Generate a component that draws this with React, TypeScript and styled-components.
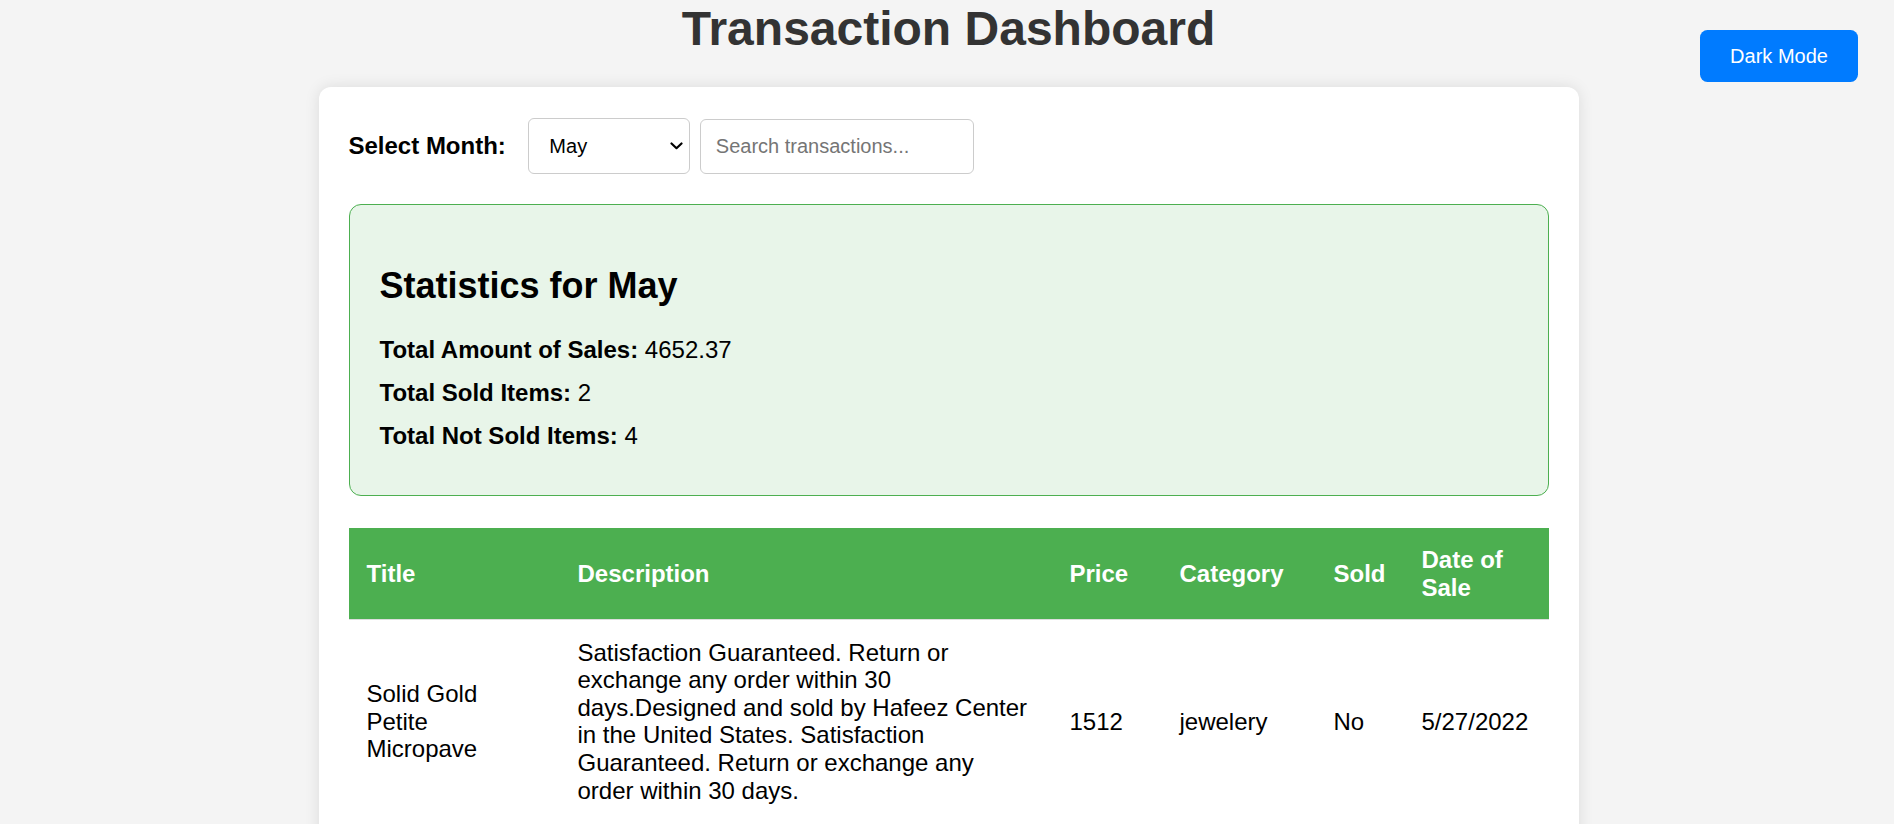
import React, { useState } from "react";
import styled, { createGlobalStyle } from "styled-components";

const GlobalStyle = createGlobalStyle`
  * { box-sizing: border-box; }
  body {
    margin: 0;
    background: #f4f4f4;
    font-family: "Liberation Sans", Arial, sans-serif;
    color: #000;
  }
`;

const Page = styled.div`
  position: relative;
  padding: 1px 0 0 3px;
  min-height: 824px;
`;

const Title = styled.h1`
  margin: 0;
  text-align: center;
  font-size: 48px;
  line-height: 55px;
  font-weight: bold;
  color: #333;
`;

const ModeButton = styled.button`
  position: absolute;
  top: 30px;
  right: 36px;
  width: 158px;
  height: 52px;
  border: none;
  border-radius: 7.5px;
  background: #007bff;
  color: #fff;
  font-family: "Liberation Sans", Arial, sans-serif;
  font-size: 20px;
  cursor: pointer;
`;

const Card = styled.main`
  width: 1260px;
  margin: 31px auto 0;
  padding: 30px;
  background: #fff;
  border-radius: 12px;
  box-shadow: 0 0 15px rgba(0, 0, 0, 0.1);
`;

const Controls = styled.div`
  display: flex;
  align-items: center;
  height: 58px;
  margin-bottom: 29px;
`;

const Label = styled.label`
  font-size: 24px;
  font-weight: bold;
  margin-right: 22px;
`;

const SelectWrap = styled.div`
  position: relative;
  width: 162px;
  height: 56px;
  margin-right: 10px;
`;

const MonthSelect = styled.select`
  appearance: none;
  -webkit-appearance: none;
  width: 100%;
  height: 100%;
  padding: 0 40px 0 20.5px;
  font-family: "Liberation Sans", Arial, sans-serif;
  font-size: 20px;
  color: #000;
  background: #fff;
  border: 1.5px solid #ccc;
  border-radius: 6px;
  outline: none;
`;

const Chevron = styled.svg`
  position: absolute;
  right: 7px;
  top: 24px;
  width: 13px;
  height: 8px;
  pointer-events: none;
`;

const SearchInput = styled.input`
  width: 274px;
  height: 55px;
  padding: 0 15px;
  font-family: "Liberation Sans", Arial, sans-serif;
  font-size: 20px;
  border: 1.5px solid #ccc;
  border-radius: 6px;
  &::placeholder { color: #757575; }
`;

const StatsBox = styled.section`
  border: 1.5px solid #4caf50;
  background: #e8f5e9;
  border-radius: 12px;
  padding: 30px;
`;

const StatsHeading = styled.h2`
  margin: 30px 0;
  font-size: 36px;
  line-height: 41.4px;
  font-weight: bold;
`;

const StatLine = styled.p`
  margin: 15px 0;
  font-size: 24px;
  line-height: 28px;
  & strong { font-weight: bold; }
`;

const Table = styled.table`
  width: 1200px;
  margin-top: 31.5px;
  border-collapse: collapse;
  table-layout: fixed;
`;

const Th = styled.th`
  background: #4caf50;
  color: #fff;
  padding: 18px;
  text-align: left;
  font-size: 24px;
  line-height: 27.6px;
  font-weight: bold;
  border-bottom: 1.5px solid #ddd;
`;

const Td = styled.td`
  padding: 18.5px 18px;
  font-size: 24px;
  line-height: 27.6px;
  vertical-align: middle;
  text-align: left;
`;

const columns = [
  { key: "title", label: "Title", width: 211 },
  { key: "description", label: "Description", width: 492 },
  { key: "price", label: "Price", width: 110 },
  { key: "category", label: "Category", width: 154 },
  { key: "sold", label: "Sold", width: 88 },
  { key: "date", label: "Date of Sale", width: 145 },
];

const rows = [
  {
    title: "Solid Gold Petite Micropave",
    description:
      "Satisfaction Guaranteed. Return or exchange any order within 30 days.Designed and sold by Hafeez Center in the United States. Satisfaction Guaranteed. Return or exchange any order within 30 days.",
    price: "1512",
    category: "jewelery",
    sold: "No",
    date: "5/27/2022",
  },
];

const months = [
  "January", "February", "March", "April", "May", "June",
  "July", "August", "September", "October", "November", "December",
];

export default function App() {
  const [month, setMonth] = useState("May");
  return (
    <Page>
      <GlobalStyle />
      <Title>Transaction Dashboard</Title>
      <ModeButton>Dark Mode</ModeButton>
      <Card>
        <Controls>
          <Label>Select Month:</Label>
          <SelectWrap>
            <MonthSelect value={month} onChange={(e) => setMonth(e.target.value)}>
              {months.map((m) => (
                <option key={m} value={m}>{m}</option>
              ))}
            </MonthSelect>
            <Chevron viewBox="0 0 13 8" aria-hidden="true">
              <polyline
                points="1.5,1.5 6.5,6.2 11.5,1.5"
                fill="none"
                stroke="#000"
                strokeWidth="2.2"
                strokeLinecap="round"
                strokeLinejoin="round"
              />
            </Chevron>
          </SelectWrap>
          <SearchInput placeholder="Search transactions..." />
        </Controls>
        <StatsBox>
          <StatsHeading>Statistics for {month}</StatsHeading>
          <StatLine><strong>Total Amount of Sales:</strong> 4652.37</StatLine>
          <StatLine><strong>Total Sold Items:</strong> 2</StatLine>
          <StatLine><strong>Total Not Sold Items:</strong> 4</StatLine>
        </StatsBox>
        <Table>
          <colgroup>
            {columns.map((c) => (
              <col key={c.key} style={{ width: c.width }} />
            ))}
          </colgroup>
          <thead>
            <tr>
              {columns.map((c) => (
                <Th key={c.key}>{c.label}</Th>
              ))}
            </tr>
          </thead>
          <tbody>
            {rows.map((r, i) => (
              <tr key={i}>
                <Td>{r.title}</Td>
                <Td>{r.description}</Td>
                <Td>{r.price}</Td>
                <Td>{r.category}</Td>
                <Td>{r.sold}</Td>
                <Td>{r.date}</Td>
              </tr>
            ))}
          </tbody>
        </Table>
      </Card>
    </Page>
  );
}
